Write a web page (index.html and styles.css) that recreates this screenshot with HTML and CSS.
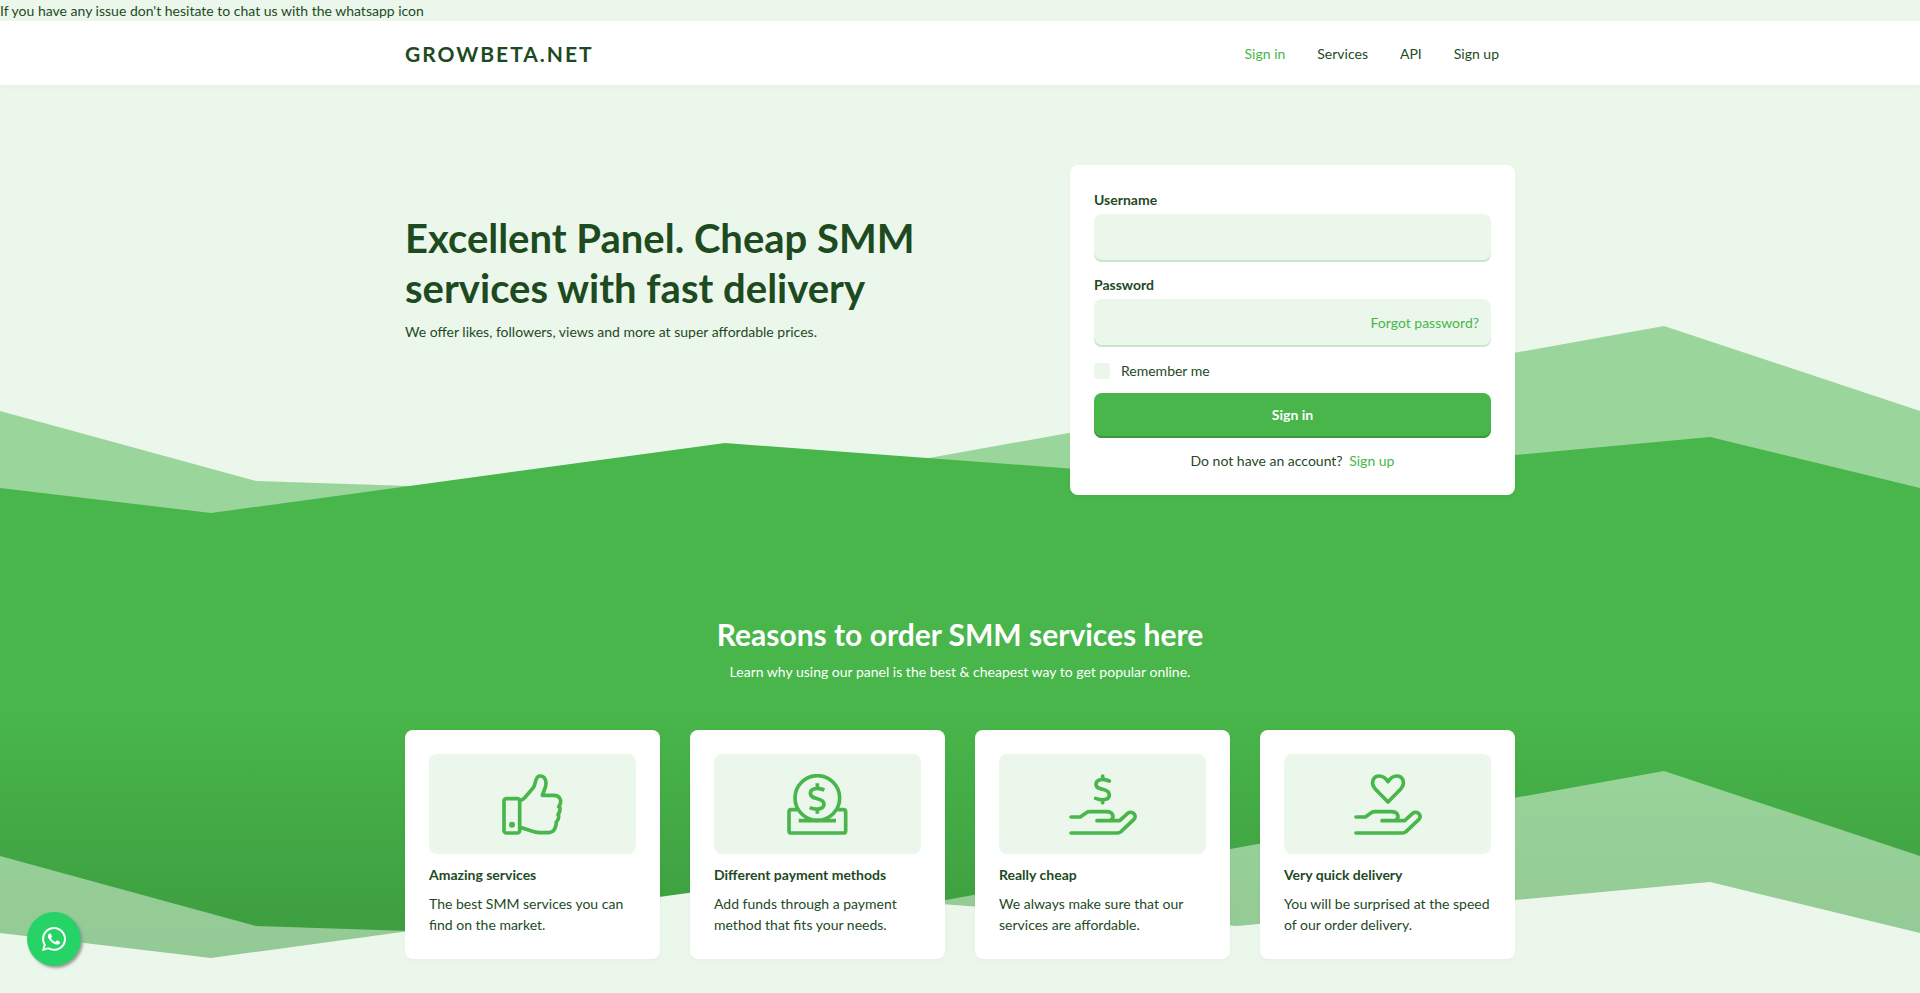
FILE: index.html
```html
<!DOCTYPE html>
<html lang="en">
<head>
    <meta charset="UTF-8">
    <meta name="viewport" content="width=device-width, initial-scale=1.0">
    <title>GROWBETA.NET</title>
    <link rel="stylesheet" href="styles.css">
</head>
<body>
    <div class="notice">If you have any issue don't hesitate to chat us with the whatsapp icon</div>

    <header class="header">
        <div class="container header-inner">
            <a class="logo" href="#">GROWBETA.NET</a>
            <nav class="nav">
                <a class="nav-link active" href="#">Sign in</a>
                <a class="nav-link" href="#">Services</a>
                <a class="nav-link" href="#">API</a>
                <a class="nav-link" href="#">Sign up</a>
            </nav>
        </div>
    </header>

    <section class="hero">
        <svg class="waves" viewBox="0 0 1920 249" preserveAspectRatio="none" aria-hidden="true">
            <path class="wave-green wave-back" d="M0 85L256 155L718 170L1664 0L1920 85V249H0Z"/>
            <path class="wave-green" d="M0 162L211 187L725 117L1237 155L1710 111L1920 162V249H0Z"/>
        </svg>
        <div class="container hero-inner">
            <div class="hero-text">
                <h1>Excellent Panel. Cheap SMM services with fast delivery</h1>
                <p>We offer likes, followers, views and more at super affordable prices.</p>
            </div>
            <form class="card login">
                <label class="field-label" for="username">Username</label>
                <input class="field" type="text" id="username">
                <label class="field-label" for="password">Password</label>
                <div class="field-wrap">
                    <input class="field" type="password" id="password">
                    <a class="forgot" href="#">Forgot password?</a>
                </div>
                <div class="remember">
                    <input type="checkbox" id="remember">
                    <label for="remember">Remember me</label>
                </div>
                <button class="btn" type="submit">Sign in</button>
                <p class="signup">Do not have an account? <a href="#">Sign up</a></p>
            </form>
        </div>
    </section>

    <section class="reasons">
        <svg class="waves" viewBox="0 0 1920 222" preserveAspectRatio="none" aria-hidden="true">
            <path class="wave-light wave-back" d="M0 85L256 155L718 170L1664 0L1920 85V222H0Z"/>
            <path class="wave-light" d="M0 162L211 187L725 117L1237 155L1710 111L1920 162V222H0Z"/>
        </svg>
        <div class="container reasons-inner">
            <h2>Reasons to order SMM services here</h2>
            <p class="lead">Learn why using our panel is the best &amp; cheapest way to get popular online.</p>
            <div class="cards">
                <div class="card">
                    <div class="card-icon">
                        <svg class="icon" viewBox="0 0 183 183" width="61" height="61">
                            <rect x="6" y="74" width="47" height="103" rx="7"/>
                            <circle class="dot" cx="30" cy="152" r="9"/>
                            <path d="M53 80C64 78 64 76 70 69L94 41C101 33 99 8 112 6C125 5 132 14 132 27C132 42 126 48 121 64H156C174 64 179 80 174 92L170 98L174 102Q175 114 168 122L170 126Q171 136 163 144C162 162 157 176 138 176H118C94 176 78 165 53 160"/>
                        </svg>
                    </div>
                    <h3>Amazing services</h3>
                    <p>The best SMM services you can find on the market.</p>
                </div>
                <div class="card">
                    <div class="card-icon">
                        <svg class="icon" viewBox="0 0 183 183" width="61" height="61">
                            <circle cx="91" cy="72" r="67"/>
                            <path d="M30 107H13Q6 107 6 114V170Q6 177 13 177H169Q176 177 176 170V114Q176 107 169 107H152M35 140H147"/>
                            <path d="M112 48C90 38 70 44 70 58C70 69 80 71 91 74C104 77 111 81 111 90C111 106 88 109 68 101M91 28V42M91 105V119"/>
                        </svg>
                    </div>
                    <h3>Different payment methods</h3>
                    <p>Add funds through a payment method that fits your needs.</p>
                </div>
                <div class="card">
                    <div class="card-icon">
                        <svg class="icon round" viewBox="0 0 204 183" width="68" height="61">
                            <path d="M121 21C100 11 81 17 81 31C81 42 91 44 101 46C114 49 121 53 121 63C121 78 100 81 80 73M101 6V14M101 77V86"/>
                            <path d="M6 129H34L54 115Q57 113 62 113H112C134 113 137 132 124 140M84 140H152L176 118C188 108 207 124 194 137L156 173Q151 177 146 177H6"/>
                        </svg>
                    </div>
                    <h3>Really cheap</h3>
                    <p>We always make sure that our services are affordable.</p>
                </div>
                <div class="card">
                    <div class="card-icon">
                        <svg class="icon round" viewBox="0 0 204 183" width="68" height="61">
                            <path d="M102 84L63 44C49 27 57 6 76 6C89 6 97 15 102 23C107 15 115 6 128 6C147 6 155 27 141 44Z"/>
                            <path d="M6 129H34L54 115Q57 113 62 113H112C134 113 137 132 124 140M84 140H152L176 118C188 108 207 124 194 137L156 173Q151 177 146 177H6"/>
                        </svg>
                    </div>
                    <h3>Very quick delivery</h3>
                    <p>You will be surprised at the speed of our order delivery.</p>
                </div>
            </div>
        </div>
    </section>

    <a class="whatsapp" href="#" aria-label="WhatsApp">
        <svg viewBox="0 32 448 448" width="24" height="24">
            <path d="M380.9 97.1C339 55.1 283.2 32 223.9 32c-122.4 0-222 99.6-222 222 0 39.1 10.2 77.3 29.6 111L0 480l117.7-30.9c32.4 17.7 68.9 27 106.1 27h.1c122.3 0 224.1-99.6 224.1-222 0-59.3-25.2-115-67.1-157zm-157 341.6c-33.2 0-65.7-8.9-94-25.7l-6.7-4-69.8 18.3L72 359.2l-4.4-7c-18.5-29.4-28.2-63.3-28.2-98.2 0-101.7 82.8-184.5 184.6-184.5 49.3 0 95.6 19.2 130.4 54.1 34.8 34.9 56.2 81.2 56.1 130.5 0 101.8-84.9 184.6-186.6 184.6zm101.2-138.2c-5.5-2.8-32.8-16.2-37.9-18-5.1-1.9-8.8-2.8-12.5 2.8-3.7 5.6-14.3 18-17.6 21.8-3.2 3.7-6.5 4.2-12 1.4-32.6-16.3-54-29.1-75.5-66-5.7-9.8 5.7-9.1 16.3-30.3 1.8-3.7.9-6.9-.5-9.7-1.4-2.8-12.5-30.1-17.1-41.2-4.5-10.8-9.1-9.3-12.5-9.5-3.2-.2-6.9-.2-10.6-.2-3.7 0-9.7 1.4-14.8 6.9-5.1 5.6-19.4 19-19.4 46.3 0 27.3 19.9 53.7 22.6 57.4 2.8 3.7 39.1 59.7 94.8 83.8 35.2 15.2 49 16.5 66.6 13.9 10.7-1.6 32.8-13.4 37.4-26.4 4.6-13 4.6-24.1 3.2-26.4-1.3-2.5-5-3.9-10.5-6.6z"/>
        </svg>
    </a>
</body>
</html>
```
FILE: styles.css
```css
* {
    box-sizing: border-box;
}

body {
    margin: 0;
    background-color: #ecf7ec;
    color: #1e4a1f;
    font-family: Lato, "Open Sans", sans-serif;
    font-size: 14px;
    line-height: 21px;
}

h1, h2, h3, p {
    margin: 0;
}

a {
    color: #48b64a;
    text-decoration: none;
}

.container {
    max-width: 1110px;
    margin: 0 auto;
}

/* header */
.header {
    position: relative;
    z-index: 1;
    background-color: #fff;
    box-shadow: 0 2px 4px rgba(30, 74, 31, 0.04);
}

.header-inner {
    display: flex;
    align-items: center;
    justify-content: space-between;
    height: 64px;
}

.logo {
    color: #1e4a1f;
    font-size: 21px;
    font-weight: bold;
    letter-spacing: 2px;
}

.nav {
    display: flex;
    gap: 32px;
    padding-right: 16px;
}

.nav-link {
    color: #1e4a1f;
}

.nav-link.active {
    color: #48b64a;
}

/* mountains behind the sections */
.hero, .reasons {
    position: relative;
}

.waves {
    position: absolute;
    left: 0;
    bottom: 0;
    width: 100%;
}

.hero .waves {
    height: 249px;
}

.reasons .waves {
    height: 222px;
}

.wave-green {
    fill: #48b64a;
}

.wave-light {
    fill: #ecf7ec;
}

.wave-back {
    opacity: 0.5;
}

/* hero */
.hero {
    padding: 80px 0;
}

.hero-inner {
    position: relative;
    display: flex;
    justify-content: space-between;
    align-items: flex-start;
}

.hero-text {
    width: 540px;
    padding-top: 48px;
}

h1 {
    margin-bottom: 8px;
    font-size: 40px;
    line-height: 50px;
}

.card {
    padding: 24px;
    background-color: #fff;
    border-radius: 8px;
    box-shadow: 0 2px 4px rgba(30, 74, 31, 0.04);
}

.login {
    display: flex;
    flex-direction: column;
    width: 445px;
}

.field-label {
    margin-bottom: 4px;
    font-weight: bold;
}

.field {
    display: block;
    width: 100%;
    height: 48px;
    margin-bottom: 12px;
    padding: 0 12px;
    border: none;
    border-radius: 8px;
    background-color: #ecf7ec;
    box-shadow: inset 0 -2px 0 #c8e6c9;
    color: #1e4a1f;
    font: inherit;
}

.field-wrap {
    position: relative;
}

.forgot {
    position: absolute;
    top: 13px;
    right: 12px;
}

.remember {
    display: flex;
    align-items: center;
    gap: 11px;
    margin: 1px 0 12px;
}

.remember input {
    appearance: none;
    width: 16px;
    height: 16px;
    margin: 0;
    border-radius: 3px;
    background-color: #ecf7ec;
}

.remember input:checked {
    background-color: #48b64a;
}

.btn {
    height: 45px;
    padding: 0 12px 2px;
    border: none;
    border-radius: 8px;
    background-color: #48b64a;
    box-shadow: inset 0 -2px 0 #3b973d;
    color: #fff;
    font: inherit;
    font-weight: bold;
    cursor: pointer;
}

.signup {
    margin-top: 12px;
    text-align: center;
}

.signup a {
    margin-left: 3px;
}

/* reasons */
.reasons {
    padding: 40px 0 34px;
    background: linear-gradient(#48b64a 33%, #3b973d);
}

.reasons-inner {
    position: relative;
}

h2 {
    color: #fff;
    font-size: 30px;
    line-height: 38px;
    text-align: center;
}

.lead {
    margin: 8px 0 48px;
    color: #fff;
    text-align: center;
}

.cards {
    display: grid;
    grid-template-columns: repeat(4, 1fr);
    gap: 30px;
}

.card-icon {
    display: flex;
    align-items: center;
    justify-content: center;
    height: 100px;
    margin-bottom: 10px;
    border-radius: 8px;
    background-color: #ecf7ec;
}

.icon {
    fill: none;
    stroke: #48b64a;
    stroke-width: 11;
    stroke-linejoin: round;
}

.icon.round {
    stroke-linecap: round;
}

.icon .dot {
    fill: #48b64a;
    stroke: none;
}

h3 {
    margin-bottom: 8px;
    font-size: 14px;
}

/* chat button */
.whatsapp {
    position: fixed;
    left: 27px;
    bottom: 27px;
    display: flex;
    align-items: center;
    justify-content: center;
    width: 54px;
    height: 54px;
    border-radius: 50%;
    background-color: #25d366;
    box-shadow: 2px 2px 3px #999;
    fill: #fff;
}
```
